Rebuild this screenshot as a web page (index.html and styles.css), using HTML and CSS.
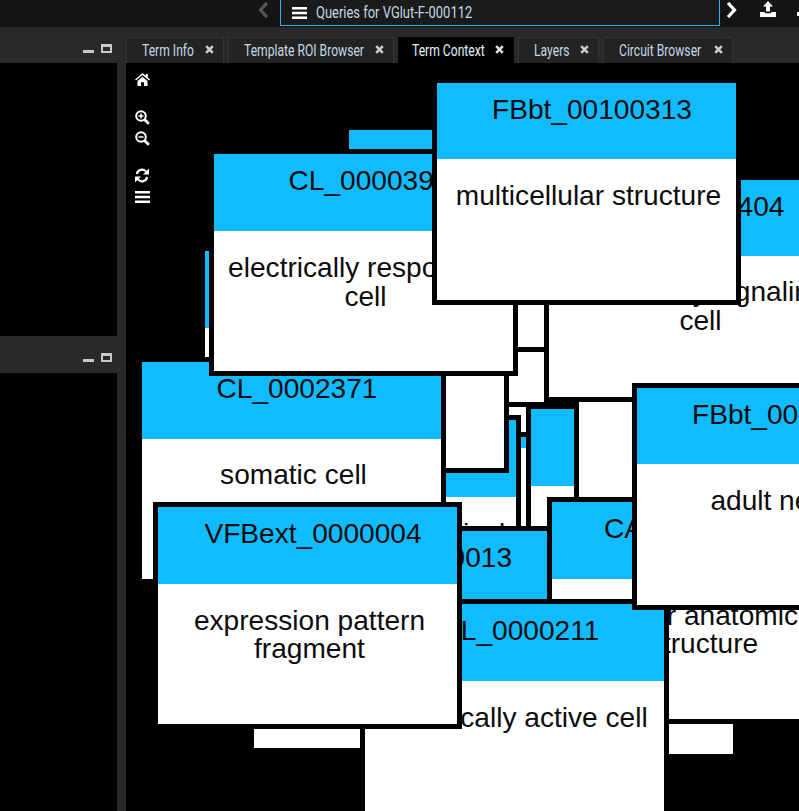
FILE: index.html
```html
<!DOCTYPE html>
<html>
<head>
  <title>Term Context</title>
  <link rel="stylesheet" href="styles.css">
</head>
<body>
  <!-- Top bar -->
  <div class="topbar">
    <svg class="nav-left" width="11" height="16" viewBox="0 0 11 16"><path d="M9 1 L2.500 8 L9 15" fill="none" stroke="#555" stroke-width="3.200"/></svg>
    <div class="query-box">
      <svg class="query-bars" width="15" height="12" viewBox="0 0 15 12"><path d="M0 0h15v2.500H0zM0 4.700h15v2.500H0zM0 9.400h15v2.500H0z" fill="#fff"/></svg>
      <span class="narrow">Queries for VGlut-F-000112</span>
    </div>
    <svg class="nav-right" width="11" height="16" viewBox="0 0 11 16"><path d="M2 1 L8.500 8 L2 15" fill="none" stroke="#fff" stroke-width="3.200"/></svg>
    <svg class="upload" width="16" height="16" viewBox="0 0 16 16"><path d="M8 0 L13 5.500 H10 V10.500 H6 V5.500 H3 Z M0 11 H4.800 V12.200 H11.200 V11 H16 V16 H0 Z" fill="#fff"/></svg>
    <svg class="download" width="16" height="16" viewBox="0 0 16 16"><path d="M6 0 H10 V5.500 H13 L8 11 L3 5.500 H6 Z M0 12 H16 V16 H0 Z" fill="#fff"/></svg>
  </div>

  <div class="workspace">
    <!-- Left panels -->
    <div class="side">
      <div class="side-head side-head-top">
        <span class="win-min"></span>
        <span class="win-max"></span>
      </div>
      <div class="side-panel side-panel-top"></div>
      <div class="side-head side-head-low">
        <span class="win-min"></span>
        <span class="win-max"></span>
      </div>
      <div class="side-panel"></div>
    </div>

    <div class="main">
      <!-- Tabs -->
      <div class="tabs">
        <div class="tab tab-info"><span class="narrow">Term Info</span><svg class="tab-x" width="9" height="9" viewBox="0 0 9 9"><path d="M1.200 1.200 L7.800 7.800 M7.800 1.200 L1.200 7.800" stroke="#ccc" stroke-width="2.600"/></svg></div>
        <div class="tab tab-roi"><span class="narrow">Template ROI Browser</span><svg class="tab-x" width="9" height="9" viewBox="0 0 9 9"><path d="M1.200 1.200 L7.800 7.800 M7.800 1.200 L1.200 7.800" stroke="#ccc" stroke-width="2.600"/></svg></div>
        <div class="tab tab-active"><span class="narrow">Term Context</span><svg class="tab-x" width="9" height="9" viewBox="0 0 9 9"><path d="M1.200 1.200 L7.800 7.800 M7.800 1.200 L1.200 7.800" stroke="#ddd" stroke-width="2.600"/></svg></div>
        <div class="tab tab-layers"><span class="narrow">Layers</span><svg class="tab-x" width="9" height="9" viewBox="0 0 9 9"><path d="M1.200 1.200 L7.800 7.800 M7.800 1.200 L1.200 7.800" stroke="#ccc" stroke-width="2.600"/></svg></div>
        <div class="tab tab-circuit"><span class="narrow">Circuit Browser</span><svg class="tab-x" width="9" height="9" viewBox="0 0 9 9"><path d="M1.200 1.200 L7.800 7.800 M7.800 1.200 L1.200 7.800" stroke="#ccc" stroke-width="2.600"/></svg></div>
      </div>

      <!-- Graph canvas, nodes are in paint order -->
      <div class="canvas">
        <div class="node n-bar"><div class="node-head"></div><div class="node-body"></div></div>
        <div class="node n-f"><div class="node-head"></div><div class="node-body"></div></div>
        <div class="node n-e"><div class="node-head"></div><div class="node-body"></div></div>
        <div class="node n-d"><div class="node-head"></div><div class="node-body"></div></div>
        <div class="node n-g"><div class="node-head"></div><div class="node-body"></div></div>
        <div class="node n-upper"><div class="node-head"></div><div class="node-body"></div></div>
        <div class="node n-conn"><div class="node-head"></div><div class="node-body">connected anatomical structure</div></div>
        <div class="node n-left"><div class="node-head"></div><div class="node-body"></div></div>
        <div class="node n-b"><div class="node-head"></div><div class="node-body"></div></div>
        <div class="node n-c"><div class="node-head"></div><div class="node-body"></div></div>
        <div class="node n-404"><div class="node-head">CL_0000404</div><div class="node-body">electrically signaling cell</div></div>
        <div class="node n-0013"><div class="node-head">CARO_0000013</div><div class="node-body"></div></div>
        <div class="node n-caro"><div class="node-head">CARO_0000003</div><div class="node-body">cellular anatomical structure</div></div>
        <div class="node n-2371"><div class="node-head">CL_0002371</div><div class="node-body">somatic cell</div></div>
        <div class="node n-0393"><div class="node-head">CL_0000393</div><div class="node-body">electrically responsive cell</div></div>
        <div class="node n-211"><div class="node-head">CL_0000211</div><div class="node-body">electrically active cell</div></div>
        <div class="node n-vfb"><div class="node-head">VFBext_0000004</div><div class="node-body">expression pattern fragment</div></div>
        <div class="node n-adult"><div class="node-head">FBbt_00047095</div><div class="node-body">adult neuron</div></div>
        <div class="node n-multi"><div class="node-head">FBbt_00100313</div><div class="node-body">multicellular structure</div></div>

        <div class="toolbar">
          <svg class="tool-home" width="15" height="13" viewBox="0 0 15 13"><path d="M7.500 0 L10.800 2.800 V1 H12.800 V4.500 L15 6.400 L14 7.500 L7.500 2 L1 7.500 L0 6.400 Z M2.500 8 L7.500 3.700 L12.500 8 V13 H9 V9.200 H6 V13 H2.500 Z" fill="#fff"/></svg>
          <svg class="tool-plus" width="15" height="15" viewBox="0 0 15 15"><circle cx="6" cy="6" r="4.800" fill="none" stroke="#fff" stroke-width="2"/><path d="M9.500 9.500 L13.800 13.800" stroke="#fff" stroke-width="2.800"/><path d="M3.500 6 H8.500 M6 3.500 V8.500" stroke="#fff" stroke-width="1.500"/></svg>
          <svg class="tool-minus" width="15" height="15" viewBox="0 0 15 15"><circle cx="6" cy="6" r="4.800" fill="none" stroke="#fff" stroke-width="2"/><path d="M9.500 9.500 L13.800 13.800" stroke="#fff" stroke-width="2.800"/><path d="M3.500 6 H8.500" stroke="#fff" stroke-width="1.500"/></svg>
          <svg class="tool-refresh" width="14" height="15" viewBox="0 0 14 15"><path d="M1.800 6 A5.300 5.300 0 0 1 11 3.600 M12.200 9 A5.300 5.300 0 0 1 3 11.400" fill="none" stroke="#fff" stroke-width="2.200"/><path d="M14 0.500 V6.500 H8 Z M0 14.500 V8.500 H6 Z" fill="#fff"/></svg>
          <svg class="tool-bars" width="15" height="12" viewBox="0 0 15 12"><path d="M0 0h15v2.500H0zM0 4.700h15v2.500H0zM0 9.400h15v2.500H0z" fill="#fff"/></svg>
        </div>
      </div>
    </div>
  </div>
</body>
</html>
```

FILE: styles.css
```css
html, body {
  margin: 0;
  height: 100%;
  overflow: hidden;
  background-color: #000;
}
body {
  display: flex;
  flex-direction: column;
  font-family: "Liberation Sans", Arial, sans-serif;
}
/* no condensed face installed, so the label is squeezed sideways */
.narrow {
  display: inline-block;
  width: 0;
  font-family: Roboto, sans-serif;
  font-size: 16.500px;
  color: #c4d8e6;
  white-space: nowrap;
  transform: scaleX(0.785);
  transform-origin: left center;
}
.tab .narrow {
  transform: scaleX(0.735);
}

/* top bar */
.topbar {
  display: flex;
  align-items: flex-start;
  height: 27px;
  padding-left: 258px;
  background-color: #141414;
  overflow: hidden;
  flex: none;
}
.topbar svg {
  flex: none;
}
.nav-left {
  margin-top: 2px;
}
.query-box {
  display: flex;
  align-items: center;
  box-sizing: border-box;
  width: 440px;
  height: 26px;
  margin-left: 11px;
  padding-left: 11px;
  background-color: #1a1a1a;
  border: 1px solid #2fb4ea;
  border-top: none;
  flex: none;
}
.query-bars {
  margin-right: 9px;
}
.nav-right {
  margin-top: 2px;
  margin-left: 6px;
}
.upload {
  margin-top: 1px;
  margin-left: 23px;
}
.download {
  margin-top: 0;
  margin-left: 21px;
}

.workspace {
  display: flex;
  flex: 1;
  min-height: 0;
}

/* left panels */
.side {
  display: flex;
  flex-direction: column;
  width: 126px;
  background-color: #2a2929;
  flex: none;
}
.side-head {
  display: flex;
  justify-content: flex-end;
  padding-right: 14px;
  gap: 7px;
}
.side-head-top {
  height: 36px;
}
.side-head-low {
  height: 37px;
}
.side-panel {
  flex: 1;
  margin-right: 9px;
  background-color: #000;
}
.side-panel-top {
  flex: none;
  height: 273px;
}
.win-min {
  width: 11px;
  height: 3px;
  margin-top: 23px;
  background-color: #c8c8c8;
}
.win-max {
  box-sizing: border-box;
  width: 11px;
  height: 9px;
  margin-top: 17px;
  border: 2px solid #c8c8c8;
  border-top-width: 3px;
}

/* tabs */
.main {
  display: flex;
  flex-direction: column;
  flex: 1;
  min-width: 0;
}
.tabs {
  display: flex;
  gap: 4px;
  height: 26px;
  padding-top: 10px;
  background-color: #2a2929;
  flex: none;
}
.tab {
  display: flex;
  align-items: center;
  justify-content: space-between;
  box-sizing: border-box;
  padding: 0 9px 0 15px;
  background-color: #232323;
  border: 1px solid #343434;
  border-bottom: none;
}
.tab-info {
  width: 98px;
}
.tab-roi {
  width: 166px;
}
.tab-active {
  width: 116px;
  padding-left: 13px;
  background-color: #000;
  border-color: #000;
}
.tab-active .narrow {
  color: #e4eef5;
}
.tab-layers {
  width: 81px;
}
.tab-circuit {
  width: 130px;
}
.tab-x {
  margin-bottom: 3px;
}

/* graph */
.canvas {
  position: relative;
  flex: 1;
  background-color: #000;
  overflow: hidden;
}
.node {
  position: absolute;
  width: 299px;
  height: 217px;
  background-color: #fff;
  border: 5px solid #000;
  color: #0c0c0c;
  font-size: 28.100px;
  text-align: center;
  overflow: hidden;
}
.node-head {
  box-sizing: border-box;
  height: 76.500px;
  padding: 11px 0 0 11px;
  background-color: #10bcff;
  line-height: 32px;
  white-space: nowrap;
}
.node-body {
  padding: 23px 0 0 4px;
  line-height: 28.500px;
}

/* node places on the canvas */
.n-bar { left: 303px; top: 469px; }
.n-f { left: 96px; top: 387px; }
.n-e { left: 96px; top: 303px; }
.n-d { left: 96px; top: 147px; }
.n-g { left: 114px; top: 117px; }
.n-upper { left: 218px; top: 62px; }
.n-conn { left: 86px; top: 352px; }
.n-left { left: 74px; top: 183px; }
.n-b { left: 400px; top: 341px; }
.n-c { left: 448px; top: 232px; }
.n-404 { left: 418px; top: 111.600px; }
.n-0013 { left: 123px; top: 463px; }
.n-caro { left: 421px; top: 434px; }
.n-2371 { left: 11px; top: 294px; }
.n-0393 { left: 83px; top: 86px; }
.n-211 { left: 234px; top: 536px; }
.n-vfb { left: 27px; top: 439.400px; }
.n-adult { left: 506px; top: 319.600px; }
.n-multi { left: 306px; top: 14.600px; }

.n-404 .node-body,
.n-2371 .node-body,
.n-0393 .node-body {
  padding-top: 22px;
}
.n-0393 .node-body {
  line-height: 29px;
}

/* canvas tools */
.toolbar {
  position: absolute;
  left: 9px;
  top: 10px;
  display: flex;
  flex-direction: column;
  align-items: flex-start;
}
.toolbar svg {
  display: block;
}
.tool-plus {
  margin-top: 24px;
}
.tool-minus {
  margin-top: 6px;
}
.tool-refresh {
  margin-top: 22px;
}
.tool-bars {
  margin-top: 8px;
}
```
